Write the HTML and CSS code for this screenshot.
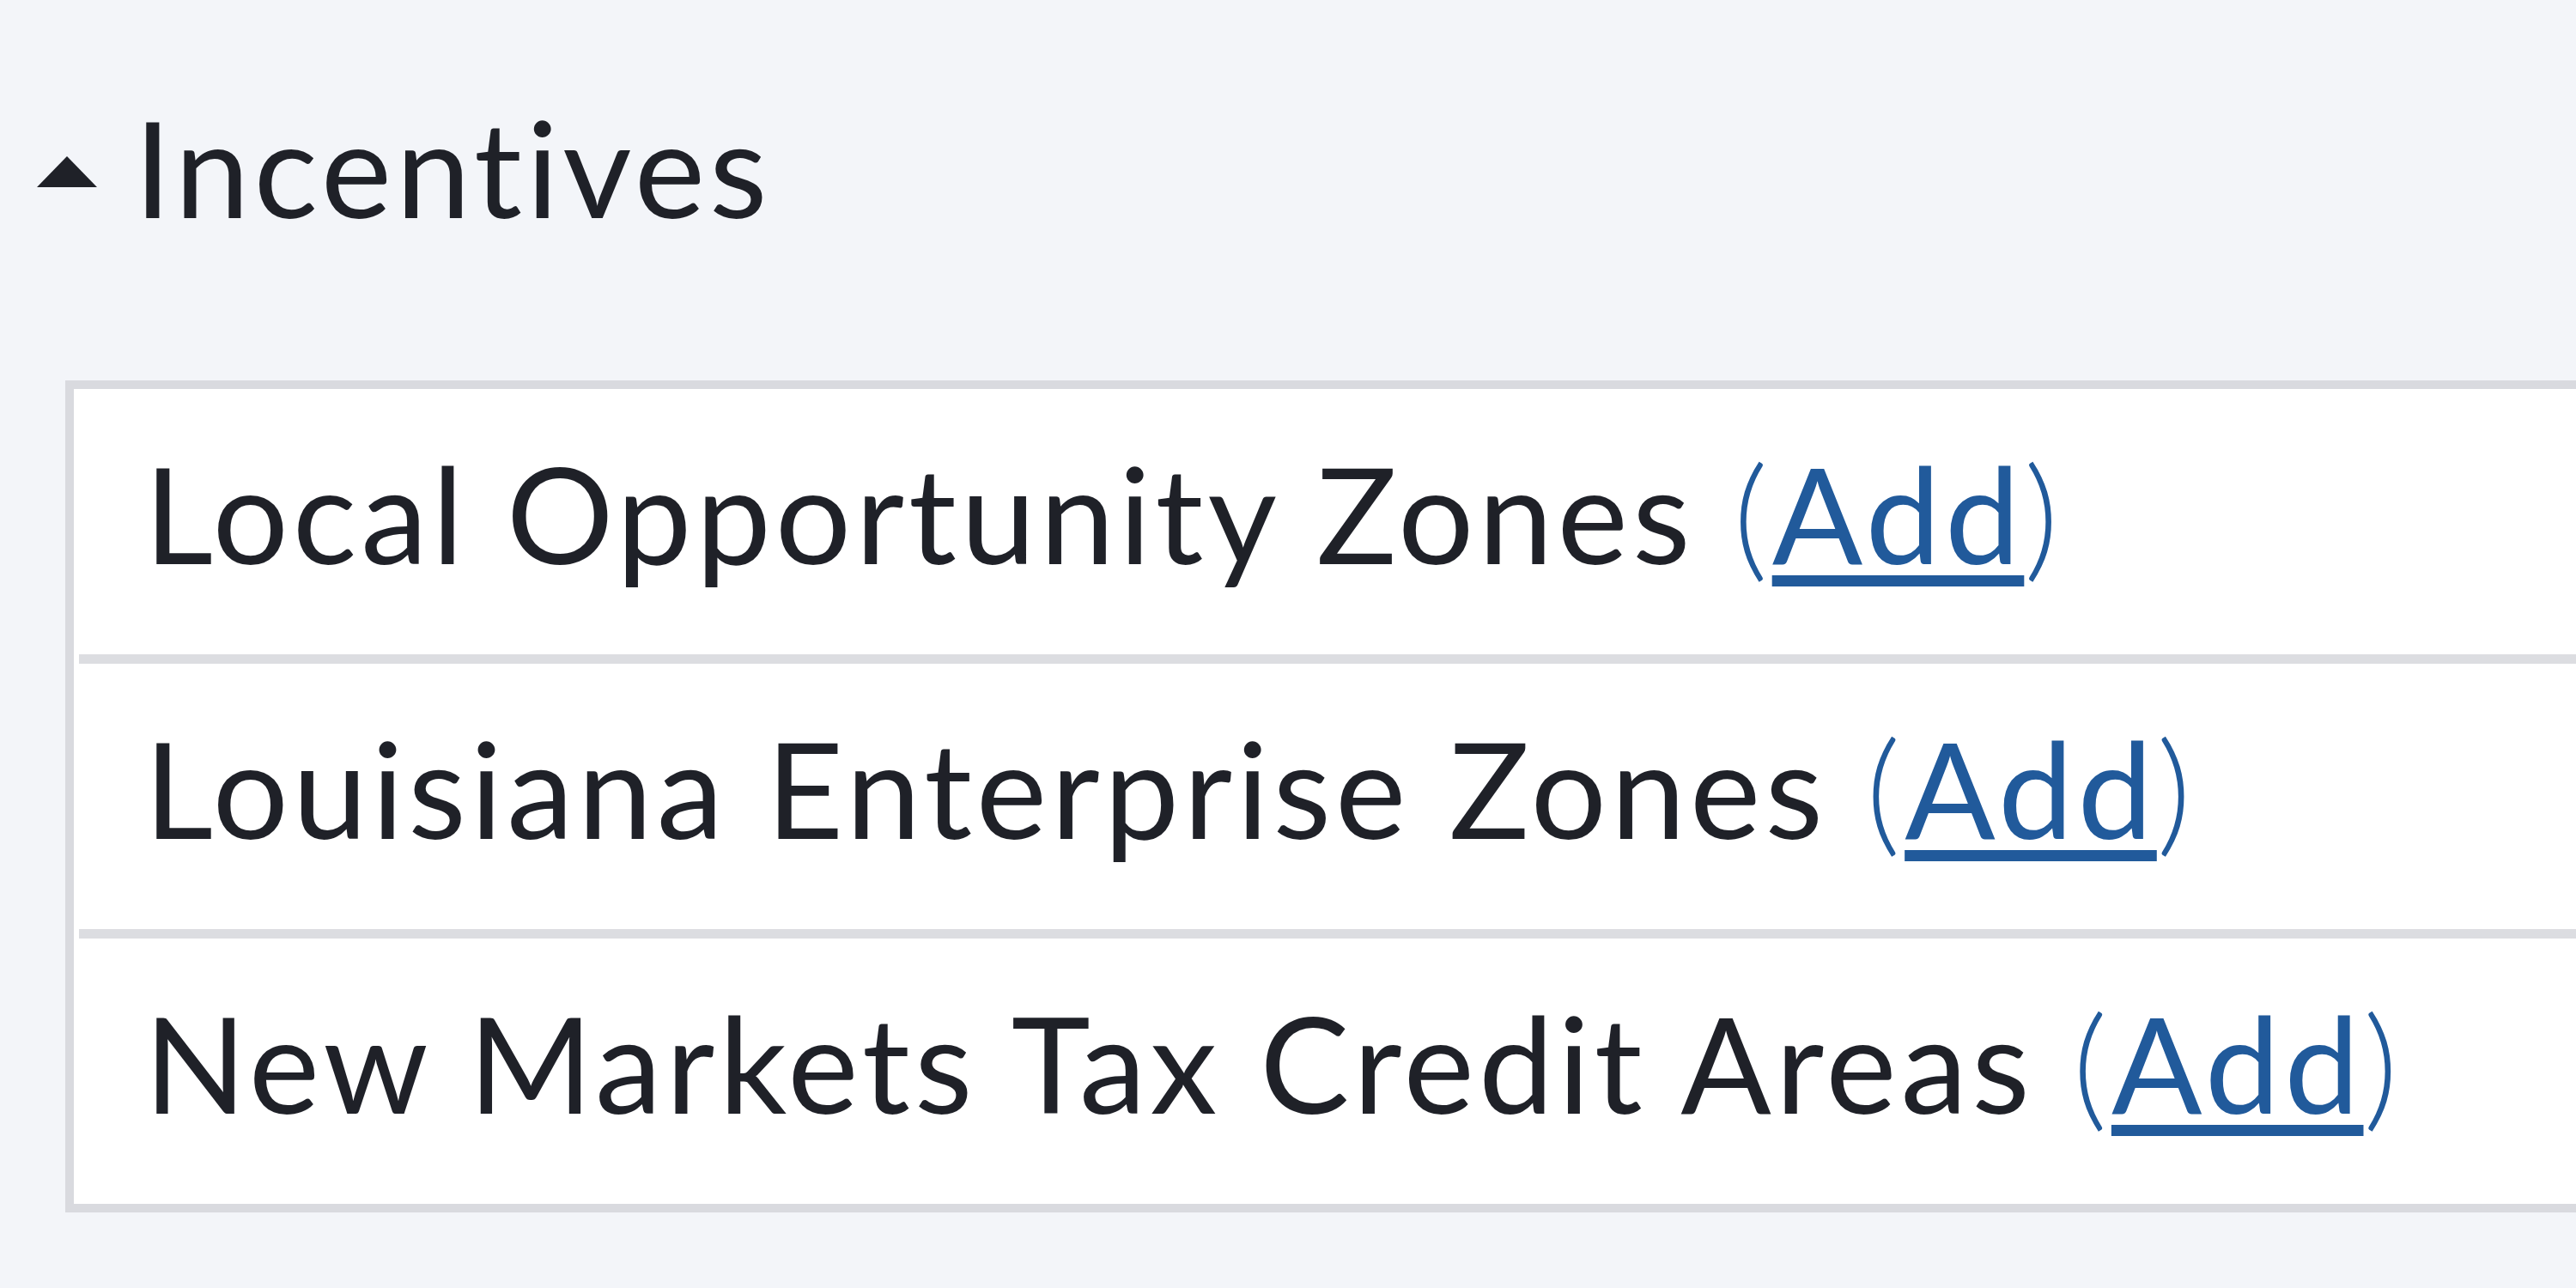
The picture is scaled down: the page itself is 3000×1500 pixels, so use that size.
FILE: index.html
```html
<html>
<head>
    <title>Incentives</title>
    <link rel="stylesheet" href="styles.css">
</head>
<body>
    <div class="section">
        <h2 class="section-title"><span class="caret"></span>Incentives</h2>
        <ul class="incentives">
            <li>Local Opportunity Zones <span class="add"><span class="paren">(</span><a href="#">Add</a><span class="paren">)</span></span></li>
            <li>Louisiana Enterprise Zones <span class="add"><span class="paren">(</span><a href="#">Add</a><span class="paren">)</span></span></li>
            <li>New Markets Tax Credit Areas <span class="add"><span class="paren">(</span><a href="#">Add</a><span class="paren">)</span></span></li>
        </ul>
    </div>
</body>
</html>
```

FILE: styles.css
```css
html, body { height: 100%; }
body { margin: 0; background: #f3f5f9; color: #1f2128; font-family: Lato, "Open Sans", sans-serif; overflow: hidden; }
.section { padding: 100px 0 0 43px; }
.section-title { display: flex; align-items: center; margin: 0; font-weight: normal; font-size: 156px; line-height: 187px; letter-spacing: 5px; }
.caret { width: 0; height: 0; margin: 12px 43px 0 0; border-left: 35px solid transparent; border-right: 35px solid transparent; border-bottom: 36px solid #1f2128; }
.incentives { list-style: none; margin: 156px -60px 0 33px; padding: 0; background: #fff; border: 10px solid #d9dadf; }
.incentives li { height: 320px; box-sizing: border-box; margin-left: 6px; padding: 50px 0 0 76px; font-size: 156px; line-height: 187px; letter-spacing: 5px; white-space: nowrap; border-bottom: 11px solid #dcdde1; }
.incentives li:last-child { height: 309px; border-bottom: none; }
.add { color: #215a9b; }
.add .paren { font-weight: 300; }
.add a { color: #215a9b; text-decoration: underline; text-decoration-thickness: 13px; text-underline-offset: 13px; }
```
